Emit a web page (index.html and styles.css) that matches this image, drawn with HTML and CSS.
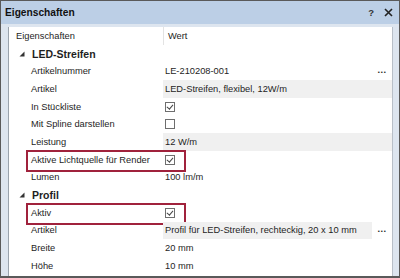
FILE: index.html
```html
<!DOCTYPE html>
<html lang="de">

<head>
  <meta charset="UTF-8">
  <title>Eigenschaften</title>
  <link rel="stylesheet" href="styles.css">
</head>

<body>
  <div class="window">
    <header class="titlebar">
      <div class="title">Eigenschaften</div>
      <div class="buttons">
        <span class="help">?</span>
        <svg class="close" width="9" height="9" viewBox="0 0 9 9">
          <path d="M1 1 L8 8 M8 1 L1 8" stroke="#222" stroke-width="1.6" />
        </svg>
      </div>
    </header>
    <div class="frame">
      <div class="panel">
        <div class="row head">
          <div class="label">Eigenschaften</div>
          <div class="value">Wert</div>
        </div>

        <div class="row section">
          <div class="label">
            <svg class="tri" width="6" height="6" viewBox="0 0 6 6"><polygon points="5.5,0.5 5.5,5.5 0.5,5.5" fill="#333" /></svg>
            LED-Streifen
          </div>
        </div>
        <div class="row">
          <div class="label">Artikelnummer</div>
          <div class="value"><span class="text">LE-210208-001</span><span class="dots">...</span></div>
        </div>
        <div class="row">
          <div class="label">Artikel</div>
          <div class="value"><span class="text ro">LED-Streifen, flexibel, 12W/m</span></div>
        </div>
        <div class="row">
          <div class="label">In Stückliste</div>
          <div class="value"><span class="check on"></span></div>
        </div>
        <div class="row">
          <div class="label">Mit Spline darstellen</div>
          <div class="value"><span class="check"></span></div>
        </div>
        <div class="row">
          <div class="label">Leistung</div>
          <div class="value"><span class="text ro">12 W/m</span></div>
        </div>
        <div class="row marked">
          <div class="label">Aktive Lichtquelle für Render</div>
          <div class="value"><span class="check on"></span></div>
        </div>
        <div class="row">
          <div class="label">Lumen</div>
          <div class="value"><span class="text">100 lm/m</span></div>
        </div>

        <div class="row section">
          <div class="label">
            <svg class="tri" width="6" height="6" viewBox="0 0 6 6"><polygon points="5.5,0.5 5.5,5.5 0.5,5.5" fill="#333" /></svg>
            Profil
          </div>
        </div>
        <div class="row marked">
          <div class="label">Aktiv</div>
          <div class="value"><span class="check on"></span></div>
        </div>
        <div class="row">
          <div class="label">Artikel</div>
          <div class="value"><span class="text ro">Profil für LED-Streifen, rechteckig, 20 x 10 mm</span><span class="dots">...</span></div>
        </div>
        <div class="row">
          <div class="label">Breite</div>
          <div class="value"><span class="text">20 mm</span></div>
        </div>
        <div class="row">
          <div class="label">Höhe</div>
          <div class="value"><span class="text">10 mm</span></div>
        </div>
      </div>
    </div>
  </div>
</body>

</html>
```

FILE: styles.css
```css
* {
  margin: 0;
  padding: 0;
  box-sizing: border-box;
}

body {
  font-family: "Liberation Sans", Arial, sans-serif;
  font-size: 9.3px;
  color: #1e1e1e;
  background: #fff;
}

.window {
  width: 400px;
  height: 278px;
  border: 1px solid #5a5a5a;
  border-bottom-width: 2px;
  background: #dde5ef;
  display: flex;
  flex-direction: column;
  overflow: hidden;
}

.titlebar {
  height: 23px;
  flex: 0 0 23px;
  background: #bccfe6;
  display: flex;
  align-items: center;
  justify-content: space-between;
  padding: 0 6px 0 4px;
}

.title {
  font-size: 10.2px;
  font-weight: 700;
  color: #111;
}

.buttons {
  display: flex;
  align-items: center;
  gap: 10px;
}

.help {
  font-size: 9.5px;
  font-weight: 700;
  color: #333;
}

.frame {
  flex: 1;
  padding: 3px 6px 0 7px;
  display: flex;
}

.panel {
  flex: 1;
  background: #fff;
  border-left: 1px solid #9aa3ad;
  border-right: 1px solid #b8bfc8;
  display: flex;
  flex-direction: column;
}

.row {
  position: relative;
  display: grid;
  grid-template-columns: 154px 1fr;
  height: 17.67px;
  align-items: center;
}

.row.head {
  height: 18px;
}

.label {
  padding-left: 22px;
  white-space: nowrap;
}

.head .label {
  padding-left: 7px;
}

.head .value {
  height: 100%;
  border-left: 1px solid #e3e3e3;
  padding-left: 4px;
  display: flex;
  align-items: center;
}

.section .label {
  padding-left: 10px;
  font-size: 10.5px;
  font-weight: 700;
  display: flex;
  align-items: center;
  gap: 7px;
}

.value {
  height: 100%;
  display: flex;
  align-items: center;
}

.value .text {
  flex: 1;
  height: 100%;
  display: flex;
  align-items: center;
  padding-left: 2px;
  white-space: nowrap;
}

.value .ro {
  background: #f0f0f0;
}

.dots {
  width: 20px;
  text-align: center;
  font-weight: 700;
  letter-spacing: 0.5px;
  padding-bottom: 3px;
}

.check {
  margin-left: 2px;
  width: 10px;
  height: 10px;
  border: 1px solid #6e6e6e;
  background: #fff;
  position: relative;
}

.check.on::after {
  content: "";
  position: absolute;
  left: 2px;
  top: 0px;
  width: 2.5px;
  height: 5px;
  border-right: 1px solid #444;
  border-bottom: 1px solid #444;
  transform: rotate(40deg);
}

.marked::after {
  content: "";
  position: absolute;
  left: 17px;
  top: -1px;
  width: 156px;
  height: 18px;
  border: 2px solid #a0223c;
}
```
